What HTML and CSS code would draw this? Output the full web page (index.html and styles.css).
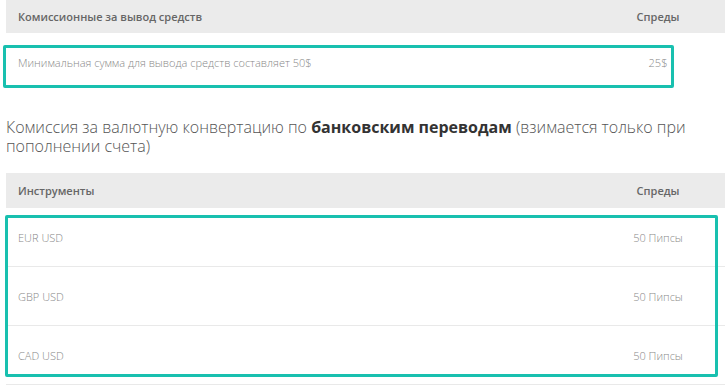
FILE: index.html
```html
<!DOCTYPE html>
<html lang="ru">
<head>
<meta charset="utf-8">
<link rel="stylesheet" href="styles.css">
</head>
<body>
<div class="page">
  <section class="table t1">
    <div class="row head">
      <div class="c1">Комиссионные за вывод средств</div>
      <div class="c2">Спреды</div>
    </div>
    <div class="row body first">
      <div class="c1">Минимальная сумма для вывода средств составляет 50$</div>
      <div class="c2">25$</div>
    </div>
    <div class="mark mark1"></div>
  </section>

  <p class="note"><span>Комиссия за валютную конвертацию по </span><b>банковским переводам</b><span> (взимается только при</span> <span>пополнении счета)</span></p>

  <section class="table t2">
    <div class="row head tall">
      <div class="c1">Инструменты</div>
      <div class="c2">Спреды</div>
    </div>
    <div class="row body">
      <div class="c1">EUR USD</div>
      <div class="c2">50 Пипсы</div>
    </div>
    <div class="row body">
      <div class="c1">GBP USD</div>
      <div class="c2">50 Пипсы</div>
    </div>
    <div class="row body last">
      <div class="c1">CAD USD</div>
      <div class="c2">50 Пипсы</div>
    </div>
    <div class="mark mark2"></div>
  </section>
</div>
</body>
</html>
```

FILE: styles.css
```css
html, body {
  margin: 0;
  padding: 0;
  background: #ffffff;
  overflow: hidden;
}
body {
  width: 725px;
  height: 387px;
  font-family: "Open Sans", "Liberation Sans", sans-serif;
}
.page {
  padding-left: 6px;
  width: 800px;
}
.table {
  position: relative;
  width: 760px;
}
.row {
  display: grid;
  grid-template-columns: 1fr 100px;
  padding: 0 58px 0 12px;
  align-items: center;
}
.head {
  height: 33px;
  background: #ebebeb;
  color: #666666;
  font-size: 11px;
  font-weight: 600;
}
.head.tall {
  height: 35px;
}
.body {
  height: 58px;
  border-bottom: 1px solid #e9e9e9;
  color: #888888;
  font-size: 11px;
  font-weight: 300;
}
.body.first {
  height: 59px;
  border-bottom: none;
}
.c2 {
  text-align: center;
}
.note {
  margin: 26px 0 17px;
  font-size: 16px;
  line-height: 19px;
  font-weight: 300;
  color: #555555;
  width: 700px;
}
.note b {
  font-weight: 700;
  color: #333333;
}
.mark {
  position: absolute;
  border: 3px solid #18c0af;
  border-radius: 2px;
  box-sizing: border-box;
}
.mark1 {
  left: -3px;
  top: 45px;
  width: 671px;
  height: 43px;
}
.mark2 {
  left: -1px;
  top: 42px;
  width: 713px;
  height: 162px;
}
```
